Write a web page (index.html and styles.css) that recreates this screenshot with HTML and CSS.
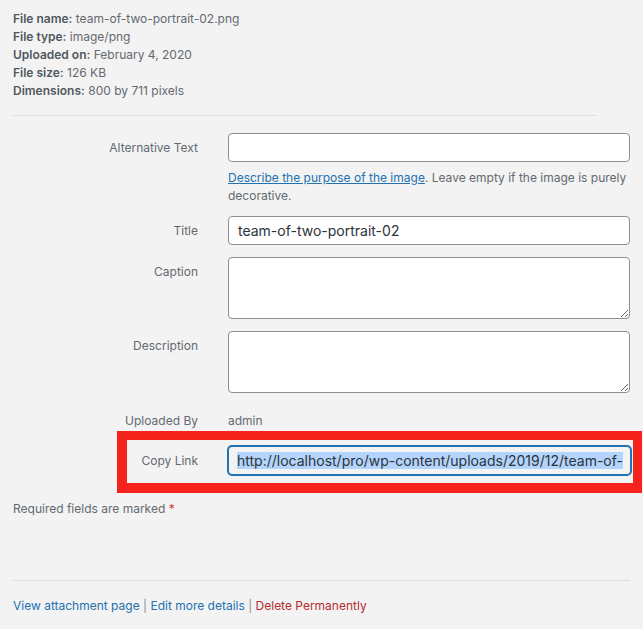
FILE: index.html
```html
<!DOCTYPE html>
<html lang="en">
<head>
<meta charset="utf-8">
<title>Attachment details</title>
<link rel="stylesheet" href="styles.css">
</head>
<body>
<div class="details">
  <div class="file-info">
    <div class="info-line"><strong>File name:</strong> team-of-two-portrait-02.png</div>
    <div class="info-line"><strong>File type:</strong> image/png</div>
    <div class="info-line"><strong>Uploaded on:</strong> February 4, 2020</div>
    <div class="info-line"><strong>File size:</strong> 126 KB</div>
    <div class="info-line"><strong>Dimensions:</strong> 800 by 711 pixels</div>
  </div>

  <div class="settings">
    <div class="setting setting-alt">
      <label class="name" for="alt-text">Alternative Text</label>
      <div class="field">
        <input class="text-input" id="alt-text" type="text" value="">
        <p class="help"><a href="#" class="help-link">Describe the purpose of the image</a>. Leave empty if the image is purely decorative.</p>
      </div>
    </div>

    <div class="setting">
      <label class="name" for="title">Title</label>
      <div class="field">
        <input class="text-input" id="title" type="text" value="team-of-two-portrait-02">
      </div>
    </div>

    <div class="setting">
      <label class="name" for="caption">Caption</label>
      <div class="field">
        <textarea class="text-area" id="caption"></textarea>
      </div>
    </div>

    <div class="setting">
      <label class="name" for="description">Description</label>
      <div class="field">
        <textarea class="text-area" id="description"></textarea>
      </div>
    </div>

    <div class="setting setting-plain">
      <span class="name">Uploaded By</span>
      <span class="value">admin</span>
    </div>

    <div class="highlight-frame">
      <div class="setting setting-copy">
        <span class="name">Copy Link</span>
        <div class="copy-input"><div class="copy-clip"><span class="selected">http://localhost/pro/wp-content/uploads/2019/12/team-of-two-portrait-02.png</span></div></div>
      </div>
    </div>
  </div>

  <p class="required">Required fields are marked <span class="req">*</span></p>

  <div class="actions">
    <a href="#" class="action-link">View attachment page</a>
    <span class="sep">|</span>
    <a href="#" class="action-link">Edit more details</a>
    <span class="sep">|</span>
    <a href="#" class="action-link delete">Delete Permanently</a>
  </div>
</div>
</body>
</html>
```

FILE: styles.css
```css
html, body {
  margin: 0;
  padding: 0;
  background: #f3f3f3;
}

body {
  font-family: Inter, "Noto Sans", sans-serif;
  font-size: 12px;
  color: #646970;
  overflow: hidden;
}

.details {
  padding: 10px 13px 0 13px;
}

/* file meta block */
.file-info {
  width: 583px;
  padding-bottom: 15px;
  border-bottom: 1px solid #dcdcde;
}

.info-line {
  line-height: 18px;
  color: #646970;
}

.info-line strong {
  font-weight: 600;
  color: #50575e;
}

/* editable settings */
.settings {
  padding-top: 17px;
}

.setting {
  display: grid;
  grid-template-columns: 185px 1fr;
  column-gap: 30px;
  align-items: start;
  margin-bottom: 12px;
}

.setting-alt {
  margin-bottom: 11px;
}

.name {
  text-align: right;
  line-height: 18px;
  padding-top: 6px;
  color: #646970;
}

.field {
  min-width: 0;
}

.text-input,
.text-area {
  display: block;
  box-sizing: border-box;
  width: 100%;
  margin: 0;
  border: 1px solid #8c8f94;
  border-radius: 4px;
  background: #fff;
  font-family: Inter, "Noto Sans", sans-serif;
  font-size: 14px;
  color: #2c3338;
  outline: none;
}

.text-input {
  height: 29px;
  padding: 0 9px;
}

.text-area {
  height: 62px;
  padding: 4px 9px;
  resize: vertical;
}

.help {
  margin: 7px 0 0 0;
  line-height: 18px;
  color: #646970;
}

.help-link {
  color: #2271b1;
}

.setting-plain {
  margin-bottom: 0;
}

.setting-plain .name,
.setting-plain .value {
  line-height: 18px;
  padding-top: 7px;
  color: #646970;
}

/* red call-out around the copy link row */
.highlight-frame {
  margin: 1px -12px 0 104px;
  border: 9px solid #f5231c;
  border-left-width: 10px;
  border-bottom-width: 10px;
  padding: 6px 2px 8px 0;
}

.setting-copy {
  grid-template-columns: 71px 1fr;
  margin-bottom: 0;
}

.setting-copy .name {
  padding-top: 6px;
}

.copy-input {
  box-sizing: border-box;
  height: 29px;
  padding: 0 7px 0 8px;
  border: 1px solid #2271b1;
  border-radius: 4px;
  box-shadow: 0 0 0 1px #2271b1;
  background: #f3f3f3;
  font-size: 14px;
  line-height: 27px;
  color: #2c3338;
  min-width: 0;
}

.copy-clip {
  white-space: nowrap;
  overflow: hidden;
}

.selected {
  background: #b3d4fc;
}

.required {
  margin: 7px 0 0 0;
  line-height: 18px;
  color: #646970;
}

.req {
  color: #d63638;
}

.actions {
  margin-top: 62px;
  padding-top: 16px;
  border-top: 1px solid #dcdcde;
  line-height: 18px;
}

.action-link {
  color: #2271b1;
  text-decoration: none;
}

.action-link.delete {
  color: #b32d2e;
}

.sep {
  color: #8c8f94;
}
```
